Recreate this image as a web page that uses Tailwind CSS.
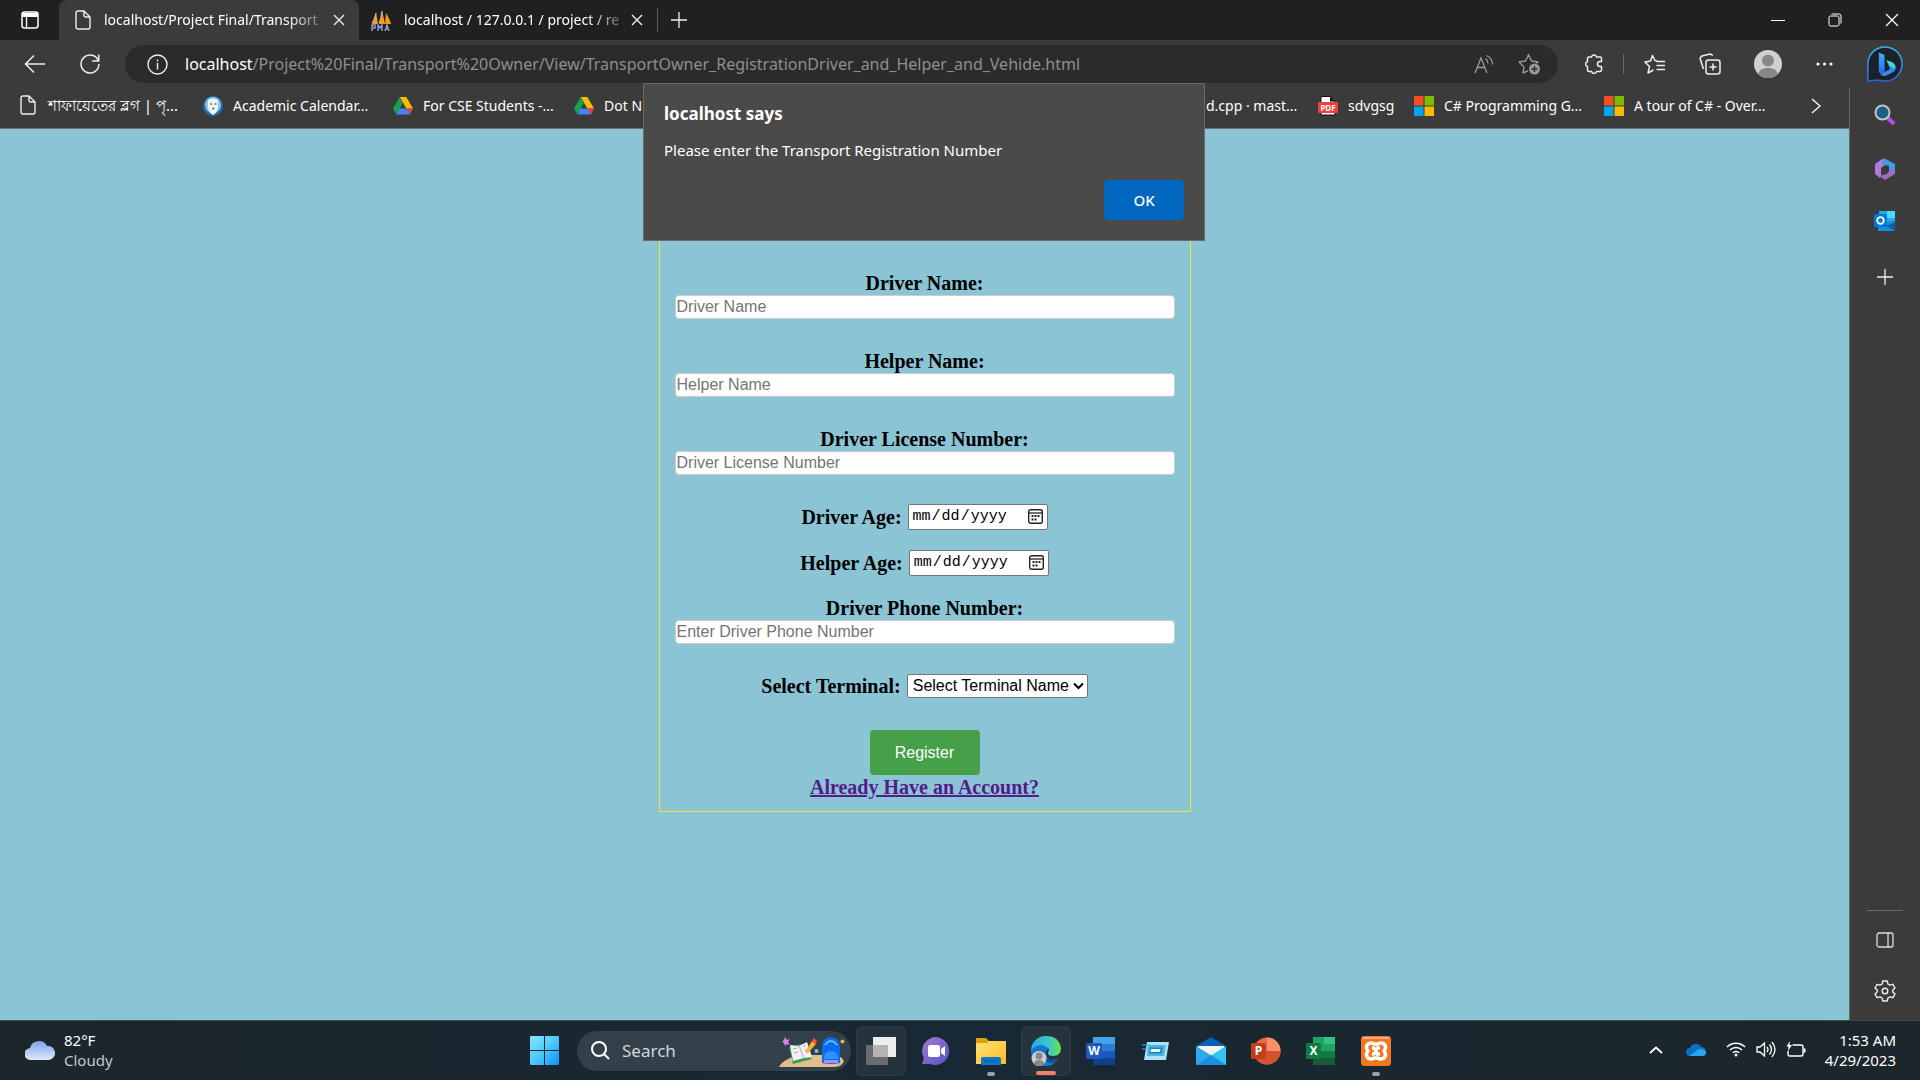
<!DOCTYPE html>
<html lang="en">
<head>
<meta charset="utf-8">
<title>Driver Registration</title>
<script src="https://cdn.jsdelivr.net/npm/@tailwindcss/browser@4"></script>
</head>
<body class="flex min-h-screen flex-col bg-[#3b3b3b] font-['Noto_Sans',sans-serif] text-[15px] text-white">

<svg width="0" height="0" class="absolute" aria-hidden="true">
  <defs>
    <symbol id="page" viewBox="0 0 16 20"><path d="M3 1h6l6 6v10a2 2 0 0 1-2 2H3a2 2 0 0 1-2-2V3a2 2 0 0 1 2-2zM9 1v4.500a1.500 1.500 0 0 0 1.500 1.500H15" fill="none" stroke="#eee" stroke-width="1.400" stroke-linejoin="round"/></symbol>
    <symbol id="x" viewBox="0 0 12 12"><path d="M1 1l10 10M11 1L1 11" stroke="#eee" stroke-width="1.400" fill="none"/></symbol>
    <symbol id="plus" viewBox="0 0 16 16"><path d="M8 0v16M0 8h16" stroke="#eee" stroke-width="1.300"/></symbol>
    <symbol id="calendar" viewBox="0 0 15 15"><rect x=".7" y=".7" width="13.600" height="13.600" rx="2" fill="none" stroke="#222" stroke-width="1.400"/><path d="M1 4h13" stroke="#222" stroke-width="1.300"/><path d="M3.500 7h2M6.500 7h2M9.500 7h2M3.500 10.500h2M6.500 10.500h2" stroke="#222" stroke-width="1.800"/></symbol>
    <symbol id="drive" viewBox="0 0 20 18"><path d="M6.700 0h6.600L20 11.600h-6.600z" fill="#fbbc04"/><path d="M6.700 0L0 11.600 3.300 17.500 10 5.800z" fill="#1e9d55"/><path d="M6.600 11.600H20l-3.300 5.900H3.300z" fill="#4285f4"/><path d="M13.400 11.600H20l-3.300 5.900z" fill="#ea4335"/></symbol>
    <symbol id="ms" viewBox="0 0 20 20"><path d="M0 0h9.500v9.500H0z" fill="#f25022"/><path d="M10.500 0H20v9.500h-9.500z" fill="#7fba00"/><path d="M0 10.500h9.500V20H0z" fill="#00a4ef"/><path d="M10.500 10.500H20V20h-9.500z" fill="#ffb900"/></symbol>
    <linearGradient id="win" x1="0" y1="0" x2="1" y2="1"><stop offset="0" stop-color="#8be4ff"/><stop offset=".5" stop-color="#4cc9fb"/><stop offset="1" stop-color="#0a93f7"/></linearGradient>
    <linearGradient id="bing" x1="0" y1="0" x2="0" y2="1"><stop offset="0" stop-color="#35b5f5"/><stop offset="1" stop-color="#2a63ee"/></linearGradient>
    <linearGradient id="cloud" x1="0" y1="0" x2="0" y2="1"><stop offset="0" stop-color="#7fa3ea"/><stop offset="1" stop-color="#dfe8fb"/></linearGradient>
    <linearGradient id="chat" x1="0" y1="0" x2="1" y2="1"><stop offset="0" stop-color="#a77ad0"/><stop offset="1" stop-color="#4f52c8"/></linearGradient>
    <linearGradient id="edgeTop" x1="0" y1="0" x2="1" y2="0"><stop offset="0" stop-color="#2ba7ea"/><stop offset=".6" stop-color="#37c9c4"/><stop offset="1" stop-color="#6be04d"/></linearGradient>
    <linearGradient id="folder" x1="0" y1="0" x2="1" y2="1"><stop offset="0" stop-color="#ffe07a"/><stop offset="1" stop-color="#ffbf1f"/></linearGradient>
  </defs>
</svg>

<!-- Tab strip -->
<header class="flex h-10 items-center bg-[#202020]">
  <button class="flex h-full w-[59px] items-center justify-center" aria-label="Tab actions">
    <svg width="18" height="18" viewBox="0 0 18 18"><rect x="1" y="1" width="16" height="16" rx="2.500" fill="none" stroke="#fff" stroke-width="1.500"/><path d="M1 2h16v4H1z" fill="#fff"/><path d="M5.500 6v11" stroke="#fff" stroke-width="1.300"/></svg>
  </button>
  <div class="flex h-full w-[300px] items-center rounded-t-lg bg-[#3b3b3b] pr-[14px] pl-4">
    <svg class="mr-[13px] h-5 w-4 shrink-0"><use href="#page"/></svg>
    <span class="text-sm whitespace-nowrap [mask-image:linear-gradient(to_right,black_85%,#0005)]">localhost/Project Final/Transport</span>
    <button class="ml-auto" aria-label="Close tab"><svg class="size-3"><use href="#x"/></svg></button>
  </div>
  <div class="flex h-full w-[298px] items-center pr-[14px] pl-3">
    <svg class="mr-3 shrink-0" width="21" height="21" viewBox="0 0 21 21"><path d="M1 14C3 10 5 6 5 2l2 12zM8 14c2-4 3-9 3-14l3 14zM14 14l1-11c2 3 4 7 5 11z" fill="#f89c0e"/><path d="M1 13c2-3 3-6 4-10M8 13c2-3 2-8 3-12" stroke="#c9d0e8" fill="none"/><path d="M1 21v-6h3v3H1M7 21v-6l2 3 2-3v6M14 21l2-6 2 6M15 19h3" stroke="#8f95cf" stroke-width="1.500" fill="none"/></svg>
    <span class="text-sm whitespace-nowrap [mask-image:linear-gradient(to_right,black_85%,#0005)]">localhost / 127.0.0.1 / project / re</span>
    <button class="ml-auto" aria-label="Close tab"><svg class="size-3"><use href="#x"/></svg></button>
  </div>
  <div class="h-6 w-px bg-[#555]"></div>
  <button class="ml-[13px] flex" aria-label="New tab"><svg class="size-4"><use href="#plus"/></svg></button>
  <div class="ml-auto flex items-center">
    <button class="flex w-[57px] justify-center" aria-label="Minimise"><svg width="14" height="14" viewBox="0 0 14 14"><path d="M0 7.500h14" stroke="#fff"/></svg></button>
    <button class="flex w-[57px] justify-center" aria-label="Restore"><svg width="14" height="14" viewBox="0 0 14 14" fill="none" stroke="#fff"><rect x="1" y="3" width="10" height="10" rx="1.500"/><path d="M3.500 1H11a2 2 0 0 1 2 2v7.500"/></svg></button>
    <button class="flex w-[57px] justify-center" aria-label="Close"><svg width="14" height="14" viewBox="0 0 14 14"><path d="M1 1l12 12M13 1L1 13" stroke="#fff" stroke-width="1.200"/></svg></button>
  </div>
</header>

<!-- Address bar -->
<div class="flex items-center pt-[5px] pr-4">
  <button class="ml-6 flex" aria-label="Back"><svg width="22" height="20" viewBox="0 0 22 20" fill="none" stroke="#eee" stroke-width="1.500"><path d="M21 10H1.500M10 1.500L1.500 10l8.500 8.500"/></svg></button>
  <button class="mr-6 ml-[33px] flex" aria-label="Refresh"><svg width="22" height="22" viewBox="0 0 22 22" fill="none" stroke="#eee" stroke-width="1.500"><path d="M19.500 8A9 9 0 1 0 20 11M19.700 1.500V8h-6.500"/></svg></button>
  <div class="flex h-[38px] flex-1 items-center rounded-full bg-[#2b2b2b] pr-4 pl-[22px]">
    <svg class="shrink-0" width="21" height="21" viewBox="0 0 21 21" fill="none" stroke="#eee" stroke-width="1.400"><circle cx="10.500" cy="10.500" r="9.500"/><path d="M10.500 9v6.500M10.500 5.500v2"/></svg>
    <span class="ml-[17px] flex-1 text-base whitespace-nowrap text-[#8f8f8f]"><span class="text-white">localhost</span>/Project%20Final/Transport%20Owner/View/TransportOwner_RegistrationDriver_and_Helper_and_Vehide.html</span>
    <button class="flex" aria-label="Read aloud"><svg width="20" height="20" viewBox="0 0 20 20" fill="none" stroke="#9a9a9a" stroke-width="1.300"><path d="M1 19L7 4l6 15M3 13.500h8M11.500 4.500a6 6 0 0 1 2.500 5M12.500 1.500a10 10 0 0 1 6 9"/></svg></button>
    <button class="ml-6 flex" aria-label="Add to favourites"><svg width="24" height="22" viewBox="0 0 24 22" fill="none" stroke="#9a9a9a" stroke-width="1.400"><path d="M10 18l-5 2 1-6-5-5 6.500-1L10.500 1.500 13.500 8l6.500 1-2 1" stroke-linejoin="round"/><circle cx="16.500" cy="16" r="5.500" fill="#9a9a9a" stroke="none"/><path d="M16.500 13v6M13.500 16h6" stroke="#2b2b2b"/></svg></button>
  </div>
  <button class="ml-[25px] flex" aria-label="Extensions"><svg width="22" height="22" viewBox="0 0 22 22" fill="none" stroke="#eee" stroke-width="1.500" stroke-linejoin="round"><path d="M6 4h2.500a2.600 2.600 0 0 1 5 0H17q1.500 0 1.500 1.500V8.500h-1.500a2.500 2.500 0 0 0 0 5h1.500V17q0 1.500-1.500 1.500h-3.500a2.600 2.600 0 0 1-5 0H6q-1.500 0-1.500-1.500v-3.500a2.600 2.600 0 0 1 0-5V5.500Q4.500 4 6 4z"/></svg></button>
  <div class="ml-[18px] h-5 w-px bg-[#666]"></div>
  <button class="ml-5 flex" aria-label="Favourites"><svg width="22" height="20" viewBox="0 0 22 20" fill="none" stroke="#eee" stroke-width="1.500"><path d="M13 7L11 6.500 8.500 1.500 6.500 7 1 8l4.500 4.500L4 19l5.500-3M12.500 7.500H21M12.500 11.500H21M12.500 15.500H21" stroke-linejoin="round"/></svg></button>
  <button class="ml-[33px] flex" aria-label="Collections"><svg width="22" height="22" viewBox="0 0 22 22" fill="none" stroke="#eee" stroke-width="1.500"><rect x="7" y="7" width="14" height="14" rx="2.500"/><path d="M14 10.500v7M10.500 14h7M4.500 16L1.200 6Q1 4 3 3l8-2q2 0 2.500 2"/></svg></button>
  <button class="ml-[33px] flex" aria-label="Profile"><svg width="28" height="28" viewBox="0 0 28 28"><circle cx="14" cy="14" r="14" fill="#d2d0ce"/><circle cx="14" cy="10.500" r="6" fill="#8a8886"/><path d="M4 24a10.500 9 0 0 1 20 0 14 14 0 0 1-20 0z" fill="#8a8886"/></svg></button>
  <button class="ml-[34px] flex" aria-label="More"><svg width="17" height="4" viewBox="0 0 17 4" fill="#fff"><circle cx="2" cy="2" r="1.600"/><circle cx="8.500" cy="2" r="1.600"/><circle cx="15" cy="2" r="1.600"/></svg></button>
  <button class="ml-[33px] flex" aria-label="Bing chat"><svg width="38" height="38" viewBox="0 0 40 40"><path d="M2 38V19A18 18 0 1 1 20 38Q12 36 2 38z" fill="#1d2126" stroke="url(#bing)" stroke-width="1.600" stroke-linejoin="round"/><path d="M13.500 8l6 2.500v18.500l-3 2q-3-1.500-3-3z" fill="url(#bing)"/><path d="M21.500 16l8 3.500a6 6 0 0 1-.5 9l-8.500 4q-3 .8-5-1.500l10-6z" fill="#2f8cf2"/><path d="M21.500 16l6 2q4 3 3 7l-6-3z" fill="#3fd4dc"/></svg></button>
</div>

<div class="relative flex flex-1">
  <div class="flex min-w-0 flex-1 flex-col">
    <!-- Bookmarks -->
    <nav class="flex h-[46px] items-center border-b border-[#6e6e6e] pr-[27px] pl-5 text-sm whitespace-nowrap">
      <a href="#" class="flex w-[183px] items-center gap-3 text-[15px]"><svg class="h-5 w-4"><use href="#page"/></svg>শাফায়েতের ব্লগ | পৃ...</a>
      <a href="#" class="flex w-[190px] items-center gap-[10px]"><svg width="20" height="20" viewBox="0 0 20 20"><circle cx="10" cy="10" r="10" fill="#1f6fae"/><circle cx="10" cy="9" r="8" fill="#8cc4e0"/><path d="M5 4q5-3 10 0v8q-1 5-5 7-4-2-5-7z" fill="#eef4f6"/><path d="M7 8h2M11.500 8h2M9 12.500h2.500" stroke="#6b6b66" stroke-width="1.600"/></svg>Academic Calendar...</a>
      <a href="#" class="flex w-[181px] items-center gap-[10px]"><svg class="h-[18px] w-5"><use href="#drive"/></svg>For CSE Students -...</a>
      <a href="#" class="flex items-center gap-[10px]"><svg class="h-[18px] w-5"><use href="#drive"/></svg>Dot N</a>
      <a href="#" class="ml-auto w-[112px]">d.cpp · mast...</a>
      <a href="#" class="flex w-24 items-center gap-[10px]"><svg width="20" height="20" viewBox="0 0 20 20"><path d="M3 .5h9l5 5V19H3z" fill="#fff" stroke="#111"/><path d="M12 .5v5h5z" fill="#111"/><rect y="6" width="20" height="11" rx="1" fill="#f0403c"/><text x="10" y="14.500" font-size="8" font-weight="700" fill="#fff" text-anchor="middle">PDF</text></svg>sdvgsg</a>
      <a href="#" class="flex w-[190px] items-center gap-[10px]"><svg class="size-5"><use href="#ms"/></svg>C# Programming G...</a>
      <a href="#" class="flex w-[206px] items-center gap-[10px]"><svg class="size-5"><use href="#ms"/></svg>A tour of C# - Over...</a>
      <button class="flex" aria-label="More bookmarks"><svg width="12" height="16" viewBox="0 0 12 16"><path d="M2 1l8 7-8 7" fill="none" stroke="#eee" stroke-width="1.500"/></svg></button>
    </nav>

    <!-- Page -->
    <main class="flex flex-1 justify-center bg-[#8bc5d5] text-black">
      <form class="flex w-[532px] flex-col items-center self-start border border-[#f5e342] px-[15px] pt-[141px] pb-3 font-['Liberation_Serif',serif] text-xl leading-6 font-bold">
        <label for="dn">Driver Name:</label>
        <input id="dn" placeholder="Driver Name" class="mb-[30px] h-6 w-full rounded border border-[#ccc] bg-white px-px font-['Liberation_Sans',sans-serif] text-base font-normal placeholder:text-[#757575]">
        <label for="hn">Helper Name:</label>
        <input id="hn" placeholder="Helper Name" class="mb-[30px] h-6 w-full rounded border border-[#ccc] bg-white px-px font-['Liberation_Sans',sans-serif] text-base font-normal placeholder:text-[#757575]">
        <label for="dl">Driver License Number:</label>
        <input id="dl" placeholder="Driver License Number" class="mb-[29px] h-6 w-full rounded border border-[#ccc] bg-white px-px font-['Liberation_Sans',sans-serif] text-base font-normal placeholder:text-[#757575]">
        <div class="mb-5 flex items-center gap-[6px]"><label for="da">Driver Age:</label><span class="relative flex"><input id="da" type="date" class="h-[26px] w-[140px] rounded-xs border border-[#767676] bg-white px-[3px] font-['Liberation_Mono',monospace] text-[15px] font-normal [&::-webkit-calendar-picker-indicator]:opacity-0"><svg class="pointer-events-none absolute top-[5px] right-[5px] size-[15px]"><use href="#calendar"/></svg></span></div>
        <div class="mb-5 flex items-center gap-[6px]"><label for="ha">Helper Age:</label><span class="relative flex"><input id="ha" type="date" class="h-[26px] w-[140px] rounded-xs border border-[#767676] bg-white px-[3px] font-['Liberation_Mono',monospace] text-[15px] font-normal [&::-webkit-calendar-picker-indicator]:opacity-0"><svg class="pointer-events-none absolute top-[5px] right-[5px] size-[15px]"><use href="#calendar"/></svg></span></div>
        <label for="dp">Driver Phone Number:</label>
        <input id="dp" placeholder="Enter Driver Phone Number" class="mb-[30px] h-6 w-full rounded border border-[#ccc] bg-white px-px font-['Liberation_Sans',sans-serif] text-base font-normal placeholder:text-[#757575]">
        <div class="mb-8 flex items-center gap-[6px]"><label for="st">Select Terminal:</label>
          <span class="relative flex"><select id="st" class="h-6 w-[181px] appearance-none rounded-xs border border-[#767676] bg-white pl-[5px] font-['Liberation_Sans',sans-serif] text-base leading-5 font-normal"><option>Select Terminal Name</option></select><svg class="pointer-events-none absolute top-2 right-1" width="11" height="8" viewBox="0 0 11 8"><path d="M1 1.500l4.500 4.500L10 1.500" fill="none" stroke="#000" stroke-width="2"/></svg></span>
        </div>
        <button type="button" class="h-[45px] w-[110px] rounded bg-[#45a049] font-['Liberation_Sans',sans-serif] text-base font-normal text-white">Register</button>
        <a href="#" class="text-[#551a8b] underline">Already Have an Account?</a>
      </form>
    </main>

    <!-- Alert -->
    <div role="alertdialog" class="absolute top-0 left-1/2 -ml-[317px] flex h-[158px] w-[562px] flex-col border border-[#6a6a6a] bg-[#4a4a4a] px-5 pt-[18px] pb-5">
      <h1 class="text-[17px] leading-6 font-bold">localhost says</h1>
      <p class="mt-3 leading-6">Please enter the Transport Registration Number</p>
      <button class="mt-auto h-10 w-20 self-end rounded bg-[#0067c0] font-medium">OK</button>
    </div>
  </div>

  <!-- Edge sidebar -->
  <aside class="mt-[5px] flex w-[71px] flex-col items-center border-l border-[#666]">
    <button class="mt-4" aria-label="Search"><svg width="22" height="22" viewBox="0 0 22 22"><path d="M13 13l7 7" stroke="#b44cf0" stroke-width="4"/><circle cx="8.500" cy="8.500" r="7" fill="#1e5f86" stroke="#c4c4c4" stroke-width="2"/></svg></button>
    <button class="mt-8" aria-label="Microsoft 365"><svg width="22" height="22" viewBox="0 0 22 22"><path d="M1 6l7-5 3 1v5l-4 3v8l-1 2-5-4z" fill="#a97ddd"/><path d="M10 0l11 6v7l-6-1V8L8 6z" fill="#3f9be4"/><path d="M21 12v4l-10 6-6-4 8-2 3-4z" fill="#a06bc6"/></svg></button>
    <button class="mt-[31px]" aria-label="Outlook"><svg width="22" height="20" viewBox="0 0 22 20"><path d="M5 0h16v12H5z" fill="#28a8ea"/><path d="M13 0h8v7h-8z" fill="#50d9ff"/><path d="M4 10l17 0v10H4z" fill="#1490df"/><path d="M21 11v9l-9-5z" fill="#0f5fa8"/><rect y="3" width="13" height="13" rx="1.500" fill="#0078d4"/><circle cx="6.500" cy="9.500" r="3.300" fill="none" stroke="#fff" stroke-width="1.800"/></svg></button>
    <button class="mt-[38px]" aria-label="Add"><svg class="size-4"><use href="#plus"/></svg></button>
    <hr class="mt-auto w-9 border-[#6a6a6a]">
    <button class="mt-[21px]" aria-label="Hide sidebar"><svg width="18" height="16" viewBox="0 0 18 16" fill="none" stroke="#ddd" stroke-width="1.300"><rect x="1" y="1" width="16" height="14" rx="2"/><path d="M12 1v14"/></svg></button>
    <button class="mt-8 mb-[18px]" aria-label="Settings"><svg width="22" height="22" viewBox="0 0 22 22" fill="none" stroke="#eee" stroke-width="1.400" stroke-linejoin="round"><path d="M8.800 1h4.400l.7 3 2 1.200 3-.9 2.100 3.700-2.200 2v2l2.200 2-2.100 3.700-3-.9-2 1.200-.7 3H8.800l-.7-3-2-1.200-3 .9L1 14l2.200-2v-2L1 8l2.100-3.700 3 .9 2-1.200z"/><circle cx="11" cy="11" r="2.800"/></svg></button>
  </aside>
</div>

<!-- Taskbar -->
<footer class="relative flex h-[60px] items-center justify-center border-t border-[#3d474c] bg-linear-to-r from-[#1c262b] via-[#182834] to-[#1c262b]">
  <div class="absolute left-[25px] flex items-center gap-[9px] pb-[2px] leading-5">
    <svg width="30" height="20" viewBox="0 0 30 20"><path d="M6 20a6 6 0 0 1-1-12 9 8.500 0 0 1 17-2 7 7 0 0 1 2 14z" fill="url(#cloud)"/></svg>
    <p>82°F<br><span class="text-[#c4c8ca]">Cloudy</span></p>
  </div>
  <div class="flex items-center gap-[5px]">
    <button class="flex size-[50px] items-center justify-center" aria-label="Start"><svg width="29" height="29" viewBox="0 0 29 29" fill="url(#win)"><path d="M0 1q0-1 1-1h13v14H0zM15 0h13q1 0 1 1v13H15zM0 15h14v14H1q-1 0-1-1zM15 15h14v13q0 1-1 1H15z"/></svg></button>
    <div class="ml-[3px] flex h-10 w-[274px] items-center rounded-full bg-[#32404a] pl-[14px]">
      <svg class="shrink-0" width="19" height="19" viewBox="0 0 19 19" fill="none" stroke="#fff" stroke-width="2"><circle cx="8" cy="8" r="7"/><path d="M13 13l5 5"/></svg>
      <input aria-label="Search" placeholder="Search" class="ml-3 w-[157px] bg-transparent text-[17px] placeholder:text-[#d2d6d9]">
      <svg class="shrink-0" width="66" height="32" viewBox="0 0 66 32"><path d="M0 32q2-6 18-12h40q10 5 5 9-2 3-8 3z" fill="#e3bd8c"/><path d="M10 12l12-3 11 15-19 5z" fill="#3f9e4d"/><path d="M11 10l9 1 8-4 5 15-8 1-11 3z" fill="#f0f0f6"/><path d="M20 11l5 12M14 14l4-1M15 18l4-1M24 12l3-2M26 16l3-2" stroke="#a9a9bd"/><path d="M26 17l7-11 4 3-8 9z" fill="#ffb02e"/><path d="M33 6l2-3 3 3-2 3z" fill="#f4573c"/><path d="M43 28V12q0-9 9-10 9 1 9 10v16q-9 2-18 0z" fill="#0a6cf0"/><path d="M46 10q6-8 12 0" stroke="#6ad0ff" stroke-width="1.500" fill="none"/><path d="M45 24q0-8 7-8t7 8z" fill="#2f93ff"/><path d="M45 25h14v3H45z" fill="#a88bff"/><path d="M6 2l2 3 3-1-2 3 2 3-3-1-2 2-1-3-2-1 2-2z" fill="#e37bf5"/><circle cx="37.500" cy="16" r="2" fill="#5ad0e0"/><circle cx="63.500" cy="6.500" r="2" fill="#ffb02e"/></svg>
    </div>
    <button class="flex size-[50px] items-center justify-center rounded-md border border-[#2f3d47] bg-[#25333d]" aria-label="Task view"><svg width="30" height="28" viewBox="0 0 30 28"><path d="M0 8h22v20H0z" fill="#6b6b6b"/><path d="M7 0h23v20H7z" fill="#eee"/><path d="M7 8h15v12H7z" fill="#b4b4b4"/></svg></button>
    <button class="flex size-[50px] items-center justify-center" aria-label="Chat"><svg width="30" height="30" viewBox="0 0 30 30"><path d="M15 1a14 14 0 1 1-6 27H1l2-6A14 14 0 0 1 15 1z" fill="url(#chat)"/><rect x="7" y="9" width="12" height="12" rx="2" fill="#fff"/><path d="M20 13l4-3v10l-4-3z" fill="#fff"/></svg></button>
    <button class="relative flex size-[50px] items-center justify-center" aria-label="File Explorer"><svg width="30" height="28" viewBox="0 0 30 28"><path d="M0 2q0-1 1-1h9l3 3v4H0z" fill="#e0a00a"/><path d="M0 6h11l2-2h17v23H0z" fill="url(#folder)"/><path d="M5 28v-6q0-2 2-2h16q2 0 2 2v6z" fill="#0f76c8"/><path d="M8 24h14" stroke="#0a4f8f"/></svg><i class="absolute bottom-0 h-1 w-2 rounded-full bg-[#9aa1a6]"></i></button>
    <button class="relative flex size-[50px] items-center justify-center rounded-md border border-[#2f3d47] bg-[#25333d]" aria-label="Edge"><svg width="30" height="30" viewBox="0 0 30 30"><path d="M15 0a15 15 0 0 0-15 15q0 7 4 11 8 6 17 3l6-6q-13 3-12-8l3-3z" fill="#1378d4"/><path d="M0 14A15 15 0 0 1 15 0q13 0 15 12 0 8-8 8-6 0-5-4 2-2 0-4Q10 5 0 14z" fill="url(#edgeTop)"/><path d="M12 14q-4 10 8 13 4-1 7-4-13 3-15-9z" fill="#0c4f9c"/><circle cx="8" cy="22.500" r="7.500" fill="#d0cecb"/><circle cx="8" cy="20" r="3.500" fill="#8a8886"/><path d="M3 28q0-4 5-4t5 4q-5 4-10 0z" fill="#8a8886"/></svg><i class="absolute bottom-0 h-1 w-5 rounded-full bg-[#f28068]"></i></button>
    <button class="flex size-[50px] items-center justify-center" aria-label="Word"><svg width="30" height="28" viewBox="0 0 30 28"><path d="M7 0h22v7H7z" fill="#41a5ee"/><path d="M7 7h22v7H7z" fill="#2b7cd3"/><path d="M7 14h22v7H7z" fill="#185abd"/><path d="M7 21h22v7H7z" fill="#103f91"/><rect y="6" width="16" height="16" rx="1.500" fill="#2059b8"/><text x="8" y="18" font-size="12" font-weight="700" fill="#fff" text-anchor="middle">W</text></svg></button>
    <button class="flex size-[50px] items-center justify-center" aria-label="Run"><svg width="28" height="18" viewBox="0 0 28 18"><path d="M5 0h22l-3 18H2z" fill="#a9e4fb"/><path d="M0 3h8M0 7h5" stroke="#3bb0e8"/><path d="M6 3h18l-2 11H5z" fill="#4db4e6"/><path d="M8 5.500h12.500l-1 6H7z" fill="#1f7fc0"/><path d="M9 7h9.500l-.5 3H8.500z" fill="#eafaff"/></svg></button>
    <button class="flex size-[50px] items-center justify-center" aria-label="Mail"><svg width="30" height="28" viewBox="0 0 30 28"><path d="M0 9l15-9 15 9v19H0z" fill="#0a5fb4"/><path d="M2 9h26v10H2z" fill="#f2f2f2"/><path d="M0 9l16 10L0 28z" fill="#2fa8ee"/><path d="M30 9v19H0z" fill="#35c3f3"/><path d="M0 28l15-10 15 10z" fill="#1b8fe0"/></svg></button>
    <button class="flex size-[50px] items-center justify-center" aria-label="PowerPoint"><svg width="30" height="28" viewBox="0 0 30 28"><circle cx="16" cy="14" r="13.500" fill="#ed6c47"/><path d="M16 .5A13.500 13.500 0 0 1 29.500 14H16z" fill="#ff8f6b"/><path d="M2.500 14h27a13.500 13.500 0 0 1-27 0z" fill="#d35230"/><rect y="6" width="15" height="16" rx="1.500" fill="#c43e1c"/><text x="7.500" y="18" font-size="12" font-weight="700" fill="#fff" text-anchor="middle">P</text></svg></button>
    <button class="flex size-[50px] items-center justify-center" aria-label="Excel"><svg width="30" height="28" viewBox="0 0 30 28"><path d="M7 0h22v28H7z" fill="#21a366"/><path d="M18 0h11v7H18z" fill="#33c481"/><path d="M7 14h22v7H7z" fill="#107c41"/><path d="M7 21h22v7H7z" fill="#185c37"/><rect y="6" width="15" height="16" rx="1.500" fill="#107c41"/><text x="7.500" y="18" font-size="12" font-weight="700" fill="#fff" text-anchor="middle">X</text></svg></button>
    <button class="relative flex size-[50px] items-center justify-center" aria-label="XAMPP"><svg width="30" height="30" viewBox="0 0 30 30"><rect width="30" height="30" rx="3" fill="#f37623"/><path d="M2 1h26v2H2z" fill="#f8a878"/><path d="M7 15q-3-4 0-7 4-2 6 0l4 0q3-2 6 0 3 3 0 7 3 4 0 7-4 2-6 0h-4q-3 2-6 0-3-3 0-7zM11 12q4 0 4 3t-4 3M19 12h-4M19 18h-4" fill="none" stroke="#fff" stroke-width="3.500" stroke-linejoin="round"/></svg><i class="absolute bottom-0 h-1 w-2 rounded-full bg-[#9aa1a6]"></i></button>
  </div>
  <div class="absolute right-6 flex items-center pb-[2px]">
    <svg width="14" height="8" viewBox="0 0 14 8"><path d="M1 7l6-5.500L13 7" fill="none" stroke="#fff" stroke-width="1.800"/></svg>
    <svg class="ml-[23px]" width="20" height="13" viewBox="0 0 20 13"><path d="M4 13a4 4 0 0 1 0-8 6 6 0 0 1 11-1 4.500 4.500 0 0 1 1 9z" fill="#0f6cc8"/><path d="M3 13l10-7q7 0 7 4 0 3-4 3z" fill="#28a8ea"/></svg>
    <svg class="ml-5" width="20" height="15" viewBox="0 0 20 15" fill="none" stroke="#fff" stroke-width="1.500"><path d="M1 5a12.500 12.500 0 0 1 18 0M4 8a8.500 8.500 0 0 1 12 0M6.800 10.800a4.500 4.500 0 0 1 6.400 0"/><circle cx="10" cy="13" r="1.500" fill="#fff" stroke="none"/></svg>
    <svg class="ml-[10px]" width="20" height="17" viewBox="0 0 20 17" fill="none" stroke="#fff" stroke-width="1.300"><path d="M1 6h3l4.500-4v13L4 11H1zM11 6q2 2.500 0 5M13.500 3.500q4 5 0 10M16 1q6 7.500 0 15"/></svg>
    <svg class="ml-[10px]" width="20" height="17" viewBox="0 0 20 17" fill="none" stroke="#fff" stroke-width="1.400"><path d="M6.500 4H15q2 0 2 2v7q0 2-2 2H4q-2 0-2-2v-3"/><path d="M4 0L.5 5.500h2L2 10l4-6H3.500z" fill="#fff" stroke="none"/><path d="M18.500 7.500v4" stroke-width="2"/></svg>
    <p class="ml-[19px] text-right leading-5">1:53 AM<br>4/29/2023</p>
  </div>
</footer>
</body>
</html>
